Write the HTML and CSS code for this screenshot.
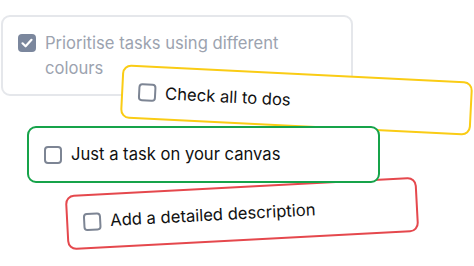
FILE: index.html
```html
<!DOCTYPE html>
<html>
<head>
<meta charset="utf-8">
<link rel="stylesheet" href="styles.css">
</head>
<body>
<div class="canvas">
  <div class="card card-done">
    <span class="box box-checked">
      <svg viewBox="0 0 18 18" width="18" height="18"><path d="M4.5 9.3 L7.6 12.3 L13.5 5.8" fill="none" stroke="#fff" stroke-width="2.2" stroke-linecap="round" stroke-linejoin="round"/></svg>
    </span>
    <span class="label">Prioritise tasks using different colours</span>
  </div>
  <div class="card card-yellow">
    <span class="box"></span>
    <span class="label">Check all to dos</span>
  </div>
  <div class="card card-red">
    <span class="box"></span>
    <span class="label">Add a detailed description</span>
  </div>
  <div class="card card-green">
    <span class="box"></span>
    <span class="label">Just a task on your canvas</span>
  </div>
</div>
</body>
</html>
```
FILE: styles.css
```css
* { box-sizing: border-box; }
html, body { margin: 0; padding: 0; background: #fff; }
body { font-family: Inter, "Noto Sans", sans-serif; }
.canvas { position: relative; width: 474px; height: 266px; overflow: hidden; }
.card {
  position: absolute;
  display: flex;
  align-items: center;
  gap: 9px;
  background: #fff;
  border: 2px solid #e5e7eb;
  border-radius: 9px;
  padding: 0 15px;
  font-size: 16.6px;
  color: #111;
}
.label { line-height: 25px; }
.box {
  flex: none;
  width: 18px;
  height: 18px;
  border: 2px solid #7d8594;
  border-radius: 4px;
  background: #fff;
}
.box-checked {
  border: none;
  background: #7b879d;
  display: flex;
}
.card-done {
  left: 1px; top: 15px; width: 352px; height: 81px;
  align-items: flex-start;
  padding-top: 17px;
  color: #9ca3af;
}
.card-done .label { margin-top: -3px; padding-right: 40px; }
.card-yellow {
  left: 121px; top: 73px; width: 351px; height: 54px;
  border-color: #facc15;
  transform: rotate(2.85deg);
}
.card-green {
  left: 27px; top: 126px; width: 353px; height: 57px;
  border-color: #16a34a;
}
.card-red {
  left: 66px; top: 186px; width: 352px; height: 55px;
  border-color: #e5484d;
  transform: rotate(-3deg);
}
```
